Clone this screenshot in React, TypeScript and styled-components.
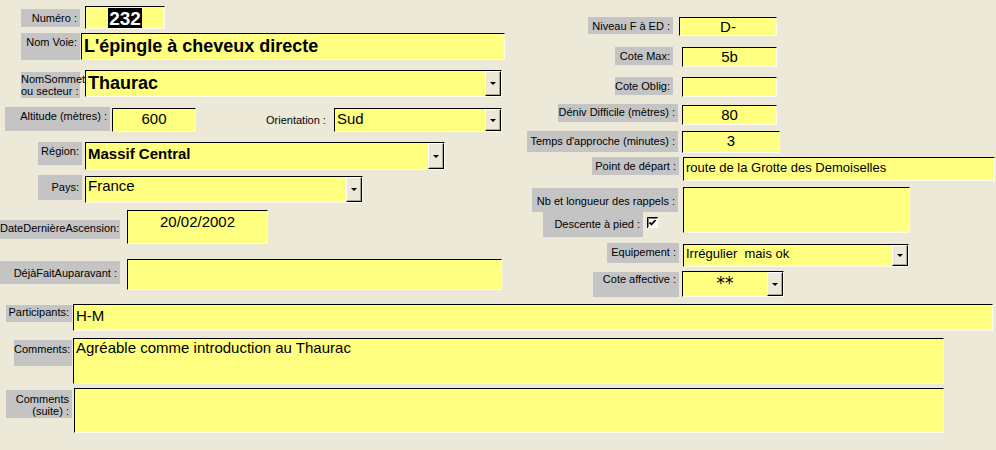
import React from 'react'
import styled, { createGlobalStyle } from 'styled-components'

const GlobalStyle = createGlobalStyle`
  html, body {
    margin: 0;
    padding: 0;
    background: #ece9d8;
  }
  body {
    font-family: "Liberation Sans", Arial, sans-serif;
    color: #000;
  }
`

const Form = styled.div`
  width: 996px;
  height: 450px;
  background: #ece9d8;
  overflow: hidden;
  display: flex;
  flex-direction: column;
`

const Top = styled.div`
  display: flex;
  height: 304px;
  flex: none;
`

const Column = styled.div<{ $width?: number; $start?: number }>`
  width: ${p => (p.$width ? p.$width + 'px' : 'auto')};
  flex: ${p => (p.$width ? 'none' : 1)};
  padding-top: ${p => p.$start ?? 0}px;
  display: flex;
  flex-direction: column;
`

const Row = styled.div<{ $h?: number; $x: number }>`
  display: flex;
  align-items: flex-start;
  flex: none;
  height: ${p => (p.$h ? p.$h + 'px' : 'auto')};
  padding-left: ${p => p.$x}px;
`

const Label = styled.div<{ $w: number; $h: number; $dy?: number; $gap?: number; $pt?: number; $lh?: number }>`
  flex: none;
  box-sizing: border-box;
  width: ${p => p.$w}px;
  height: ${p => p.$h}px;
  margin-top: ${p => p.$dy ?? 0}px;
  margin-right: ${p => p.$gap ?? 0}px;
  padding: ${p => p.$pt ?? 2}px 3px 0 0;
  background: #c4c4c4;
  font-size: 11px;
  line-height: ${p => p.$lh ?? 13}px;
  text-align: right;
  white-space: nowrap;
`

const PlainLabel = styled.div`
  flex: none;
  width: 61px;
  margin-left: 70px;
  margin-right: 7px;
  padding-top: 7px;
  font-size: 11px;
  line-height: 13px;
  white-space: nowrap;
`

const Field = styled.div<{ $w: number; $h: number; $dy?: number }>`
  flex: none;
  box-sizing: border-box;
  display: flex;
  align-items: stretch;
  width: ${p => p.$w}px;
  height: ${p => p.$h}px;
  margin-top: ${p => p.$dy ?? 0}px;
  background: #ffff80;
  border-top: 1px solid #000;
  border-left: 1px solid #000;
  border-right: 1px solid #fbfbf2;
  border-bottom: 1px solid #fbfbf2;
  overflow: hidden;
`

const Value = styled.div<{ $size?: number; $bold?: boolean; $center?: boolean; $pt?: number; $font?: string }>`
  flex: 1;
  min-width: 0;
  padding: ${p => p.$pt ?? 1}px 2px 0 2px;
  font-family: ${p => p.$font ?? '"Liberation Sans", Arial, sans-serif'};
  font-size: ${p => p.$size ?? 15}px;
  font-weight: ${p => (p.$bold ? 700 : 400)};
  line-height: ${p => Math.round((p.$size ?? 15) * 1.2)}px;
  text-align: ${p => (p.$center ? 'center' : 'left')};
  white-space: nowrap;
  overflow: hidden;
`

const Selected = styled.span`
  display: inline-block;
  background: #000;
  color: #fff;
  line-height: 21px;
  padding: 0 1px;
`

const DropButton = styled.div`
  flex: none;
  width: 16px;
  box-sizing: border-box;
  background: #ece9d8;
  border-top: 1px solid #fff;
  border-left: 1px solid #fff;
  border-right: 1px solid #000;
  border-bottom: 1px solid #000;
  box-shadow: inset -1px -1px 0 #aca899;
  display: flex;
  align-items: center;
  justify-content: center;

  &::after {
    content: '';
    border-left: 3px solid transparent;
    border-right: 3px solid transparent;
    border-top: 3px solid #000;
  }
`

const Stack = styled.div`
  flex: none;
  width: 146px;
  margin-right: 5px;
  display: flex;
  flex-direction: column;
`

const SubRow = styled.div`
  display: flex;
  align-items: flex-start;
  padding-left: 11px;
`

const Check = styled.svg`
  flex: none;
  margin: 5px 0 0 4px;
`

const CheckBox = () => (
  <Check width="11" height="11" viewBox="0 0 11 11">
    <rect x="0" y="0" width="11" height="11" fill="#fff" />
    <path d="M0.5 11V0.5H11" stroke="#000" fill="none" />
    <path d="M1.5 10V1.5H10" stroke="#808080" fill="none" />
    <path d="M2.5 5.5L4.5 7.5L8.5 3" stroke="#000" strokeWidth="1.8" fill="none" />
  </Check>
)

const App = () => {
  return (
    <>
      <GlobalStyle />
      <Form>
        <Top>
          <Column $width={520} $start={6}>
            <Row $h={27} $x={21}>
              <Label $w={59} $h={18} $dy={3} $pt={3} $gap={5}>Numéro :</Label>
              <Field $w={80} $h={23}>
                <Value $size={19} $bold $center $pt={0}>
                  <Selected>232</Selected>
                </Value>
              </Field>
            </Row>
            <Row $h={37} $x={21}>
              <Label $w={59} $h={27} $pt={3} $gap={1}>Nom Voie:</Label>
              <Field $w={424} $h={27}>
                <Value $size={18} $bold>L'épingle à cheveux directe</Value>
              </Field>
            </Row>
            <Row $h={37} $x={21}>
              <Label $w={59} $h={26} $dy={2} $pt={1} $lh={12} $gap={5}>
                NomSommet
                <br />
                ou secteur :
              </Label>
              <Field $w={417} $h={27}>
                <Value $size={18} $bold>Thaurac</Value>
                <DropButton />
              </Field>
            </Row>
            <Row $h={35} $x={5}>
              <Label $w={105} $h={24} $pt={3} $gap={2}>Altitude (mètres) :</Label>
              <Field $w={84} $h={24} $dy={1}>
                <Value $center>600</Value>
              </Field>
              <PlainLabel>Orientation :</PlainLabel>
              <Field $w={168} $h={24} $dy={1}>
                <Value>Sud</Value>
                <DropButton />
              </Field>
            </Row>
            <Row $h={33} $x={38}>
              <Label $w={44} $h={23} $pt={3} $gap={3}>Région:</Label>
              <Field $w={360} $h={28}>
                <Value $bold $pt={2}>Massif Central</Value>
                <DropButton />
              </Field>
            </Row>
            <Row $h={35} $x={38}>
              <Label $w={44} $h={25} $pt={6} $gap={3}>Pays:</Label>
              <Field $w={278} $h={27} $dy={1}>
                <Value $pt={0}>France</Value>
                <DropButton />
              </Field>
            </Row>
            <Row $h={49} $x={0}>
              <Label $w={120} $h={19} $dy={10} $pt={2} $gap={7}>DateDernièreAscension:</Label>
              <Field $w={141} $h={34}>
                <Value $center $pt={2}>20/02/2002</Value>
              </Field>
            </Row>
            <Row $h={45} $x={0}>
              <Label $w={120} $h={23} $dy={2} $pt={6} $gap={7}>DéjàFaitAuparavant :</Label>
              <Field $w={375} $h={31}>
                <Value />
              </Field>
            </Row>
          </Column>

          <Column $start={17}>
            <Row $h={30} $x={68}>
              <Label $w={85} $h={17} $pt={3} $gap={6}>Niveau F à ED :</Label>
              <Field $w={98} $h={19}>
                <Value $center $pt={0}>D-</Value>
              </Field>
            </Row>
            <Row $h={30} $x={95}>
              <Label $w={58} $h={18} $pt={3} $gap={9}>Cote Max:</Label>
              <Field $w={95} $h={20}>
                <Value $center $pt={0}>5b</Value>
              </Field>
            </Row>
            <Row $h={27} $x={95}>
              <Label $w={58} $h={18} $pt={3} $gap={9}>Cote Oblig:</Label>
              <Field $w={95} $h={20}>
                <Value />
              </Field>
            </Row>
            <Row $h={27} $x={38}>
              <Label $w={120} $h={18} $pt={2} $gap={4}>Déniv Difficile (mètres) :</Label>
              <Field $w={95} $h={20} $dy={1}>
                <Value $center $pt={0}>80</Value>
              </Field>
            </Row>
            <Row $h={26} $x={7}>
              <Label $w={151} $h={21} $pt={4} $gap={4}>Temps d'approche (minutes) :</Label>
              <Field $w={98} $h={22}>
                <Value $center $pt={0}>3</Value>
              </Field>
            </Row>
            <Row $h={30} $x={72}>
              <Label $w={87} $h={18} $pt={3} $gap={4}>Point de départ :</Label>
              <Field $w={312} $h={24}>
                <Value $size={13} $pt={2}>route de la Grotte des Demoiselles</Value>
              </Field>
            </Row>
            <Row $h={56} $x={12}>
              <Stack>
                <Label $w={146} $h={24} $dy={1} $pt={7}>Nb et longueur des rappels :</Label>
                <SubRow>
                  <Label $w={100} $h={25} $pt={6}>Descente à pied :</Label>
                  <CheckBox />
                </SubRow>
              </Stack>
              <Field $w={227} $h={46}>
                <Value />
              </Field>
            </Row>
            <Row $h={28} $x={87}>
              <Label $w={72} $h={20} $pt={3} $gap={4}>Equipement :</Label>
              <Field $w={226} $h={23} $dy={1}>
                <Value $size={13} $pt={1}>Irrégulier&nbsp; mais ok</Value>
                <DropButton />
              </Field>
            </Row>
            <Row $h={33} $x={73}>
              <Label $w={86} $h={25} $dy={1} $pt={1} $gap={3}>Cote affective :</Label>
              <Field $w={102} $h={26}>
                <Value $size={17} $center $pt={1} $font={'"DejaVu Sans", sans-serif'}>**</Value>
                <DropButton />
              </Field>
            </Row>
          </Column>
        </Top>

        <Row $h={34} $x={6}>
          <Label $w={66} $h={17} $dy={1} $pt={1} $gap={1}>Participants:</Label>
          <Field $w={920} $h={27}>
            <Value $pt={2}>H-M</Value>
          </Field>
        </Row>
        <Row $h={48} $x={14}>
          <Label $w={58} $h={26} $dy={2} $pt={3} $gap={1}>Comments:</Label>
          <Field $w={871} $h={46}>
            <Value $pt={0}>Agréable comme introduction au Thaurac</Value>
          </Field>
        </Row>
        <Row $x={6}>
          <Label $w={66} $h={28} $dy={4} $pt={3} $lh={12} $gap={2}>
            Comments
            <br />
            (suite) :
          </Label>
          <Field $w={870} $h={45} $dy={2}>
            <Value />
          </Field>
        </Row>
      </Form>
    </>
  )
}

export default App
